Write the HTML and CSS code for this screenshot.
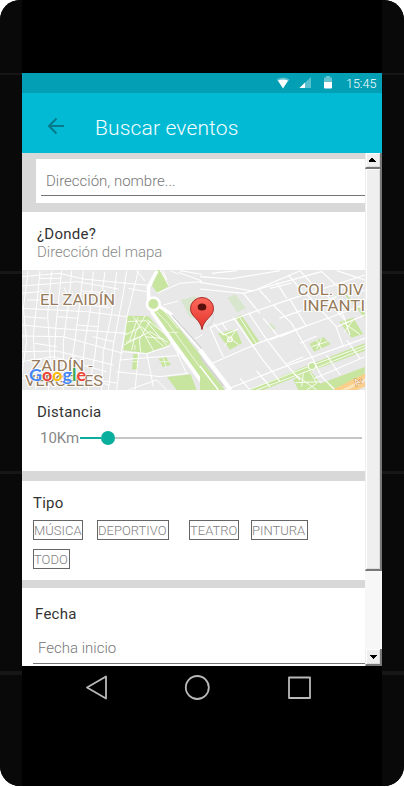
FILE: index.html
```html
<!DOCTYPE html>
<html lang="es">
<head>
<meta charset="utf-8">
<title>Buscar eventos</title>
<link rel="stylesheet" href="styles.css">
</head>
<body>
<div class="phone">
  <div class="edge"></div>
  <div class="screen">
    <div class="bezel"></div>
    <div class="status">
      <svg class="status-icons" width="60" height="20" viewBox="0 0 60 20">
        <path d="M1.5 6.5Q8 2.5 14.500 6.500L8 15Z" fill="#fff" opacity=".35"/>
        <path d="M3 7.500Q8 5.500 13 7.500L8 15.500Z" fill="#fff"/>
        <path d="M36 4V15H24.500Z" fill="#fff" opacity=".35"/>
        <path d="M30 9.500V15H24.500Z" fill="#fff"/>
        <path d="M49 4.500h2v-1.500h4v1.500h2v5h-8Z" fill="#fff" opacity=".4"/>
        <path d="M49 9h8v5.500q0 1-1 1h-6q-1 0-1-1Z" fill="#fff"/>
      </svg>
      <span class="clock">15:45</span>
    </div>
    <header class="appbar">
      <svg class="back" width="18" height="18" viewBox="0 0 18 18"><path d="M17 9H2M9.500 1.500L2 9l7.500 7.500" fill="none" stroke="#087a8c" stroke-width="2"/></svg>
      <h1>Buscar eventos</h1>
    </header>
    <div class="viewport">
      <main>
        <section class="search"><div class="searchbox"><div class="field">Dirección, nombre...</div></div></section>
        <section class="where"><h2>¿Donde?</h2><p>Dirección del mapa</p></section>
        <svg class="map" width="343" height="120" viewBox="0 0 343 120">
          <rect width="343" height="120" fill="#e8e8e8"/>
          <!-- west half -->
          <g transform="translate(-2 -5) scale(.33333)">
            <g fill="#c8e59f">
              <path d="M404 15H418L448 62L412 84L397 64Z"/>
              <path d="M322 152L386 154L452 232L444 242L380 264L310 256Z"/>
              <path d="M399 138L425 125L470 180L546 277V360L500 292Z"/>
              <path d="M340 267L354 268V314L336 313ZM416 281L438 275L453 300L428 306Z"/>
              <path d="M441 336L512 328L530 375H470Z"/>
            </g>
            <path d="M482 105L525 93L546 140V160L510 157Z" fill="#d8e6ce"/>
            <g fill="none" stroke="#fff" stroke-width="3">
              <path d="M5 35L120 25L190 42L385 61M5 63L170 50L295 72M5 85L60 80M5 130L200 140L320 155M5 180L110 190L320 205M5 213L130 215L309 265M5 260L110 258L280 300M5 290L100 275L260 320M5 340L130 330L290 354"/>
              <path d="M25 17L10 130L20 230L5 330M60 18L52 100L40 210L48 375M95 17L83 150L92 300L85 375M125 17L108 180L100 330M155 17L148 95L130 230V375M190 17L180 110L165 225L150 330M220 20L210 140L195 230L180 370M255 20L240 130L225 270L205 375M290 22L275 145L250 260L245 375M320 17L310 85L280 240L265 375M355 18L338 85L322 150L300 290L290 375M378 80L325 70M350 17L375 48"/>
              <path d="M20 105H60M60 40H124M86 94L60 75M15 155L80 160M112 155L175 160M200 120L270 128M45 235L110 245M115 285L185 302M170 180L235 185M218 215L280 230M50 310L120 315M200 345L270 360M132 67L145 96M186 78L242 82M230 100L283 105"/>
              <path d="M308 260L380 266L451 242M300 285L380 278L472 272M290 320L420 335L505 325M325 375L410 345L440 375M380 264L400 365M356 262L345 375M470 260L500 326M452 232L476 268M412 84L480 55L546 50M446 62L421 15M430 18L440 45M475 22L546 48M453 17L475 28M480 17L546 28M430 120L475 108M510 230L546 210"/>
              <path d="M322 170L378 167L441 242M316 210L365 185L430 244M312 240L390 200L445 233M340 155L362 188L402 260M375 153L348 198L335 255M390 168L358 225L362 260M318 232L360 215M354 157L329 225M375 215L430 221M430 202L381 164" stroke-width="2.500"/>
              <path d="M410 140L445 176L546 315M425 130L475 191M443 202H475M345 240V255M337 290H354M420 290L448 290M430 278L438 306" stroke-width="2"/>
              <path d="M411 17L385 67L386 105L398 144L455 226L546 352" stroke-width="11"/>
              <path d="M415 122L450 145L546 258" stroke-width="10"/>
              <circle cx="400" cy="117" r="19" fill="#c8e59f" stroke-width="8"/>
            </g>
            <path d="M456 150L546 252" stroke="#d2d2d2" stroke-width="4"/>
          </g>
          <!-- east half -->
          <g transform="translate(178 -5) scale(.33333)">
            <g fill="#c8e59f">
              <path d="M106 157L124 150L178 230L160 239ZM54 205L108 193L126 235L90 254Z"/>
              <path d="M418 170L460 158L489 207L454 218ZM328 236L370 216L392 238L343 260Z"/>
              <path d="M145 375L320 302L494 235V258L340 316L190 375ZM280 345L330 315L375 375H295Z"/>
              <path d="M360 356L494 306V330L400 375H360ZM0 280L75 375H0Z"/>
              <path d="M425 80L440 90L495 145V160L470 130Z"/>
            </g>
            <path d="M82 98L106 88L138 130L112 142ZM202 180L215 174L229 190L214 198Z" fill="#d8e6ce"/>
            <g fill="none" stroke="#fff" stroke-width="3.500">
              <path d="M0 72L130 85L365 20M0 52L160 78L300 17M0 35L90 42L240 17M35 25L110 17M30 188L70 276M30 188L240 113L495 30M25 300L180 232L410 150L495 118M40 175L70 210M65 172L80 195M100 157L185 280L240 350M145 143L200 224L258 298L300 345M190 160L235 215M220 120L275 175L340 285M270 104L320 185M320 87L408 185L430 245M360 65L430 150L450 210M365 20L410 62L495 78M410 17L495 45"/>
              <path d="M75 375L240 310L495 220M120 340L150 375M170 318L210 365M258 298L310 275M300 235L350 213M240 215L310 187M210 225L260 205M410 185L495 150M340 285L365 335L405 375M380 270L420 330M345 340L495 275M440 225L480 280M130 85L180 145M178 75L212 112M230 52L260 100M210 70L275 54M238 160L305 136M70 210L115 192M385 110L435 165M300 17L370 95M365 112L410 95M265 30L310 83"/>
              <path d="M20 185Q48 170 36 136" stroke="#dadada"/>
              <path d="M145 375L325 305L495 242M170 375L340 312L495 250" stroke-width="2.500"/>
              <path d="M66 202L116 239M108 195L73 244M120 158L170 237M426 170L480 208M460 164L432 202M335 245L382 230M350 225L365 253M365 219L350 253" stroke-width="2.500"/>
              <path d="M295 335L350 375M330 320L350 355L320 375M286 353L365 350M310 325L305 365" stroke-width="2.500"/>
              <path d="M0 255L92 375" stroke-width="13"/>
              <path d="M0 303L55 375" stroke-width="4"/>
              <circle cx="336" cy="303" r="11" fill="#c8e59f"/>
              <circle cx="90" cy="223" r="7"/>
            </g>
            <path d="M0 275L70 363" stroke="#d2d2d2" stroke-width="5"/>
            <path d="M405 378L500 330M440 382L500 355" stroke="#f9cf8b" stroke-width="13" fill="none"/>
            <path d="M425 378L500 341" stroke="#ffe5b5" stroke-width="6"/>
          </g>
          <g class="place">
            <text x="18" y="34.500" textLength="75" lengthAdjust="spacingAndGlyphs">EL ZAIDÍN</text>
            <text x="9" y="101" textLength="62" lengthAdjust="spacingAndGlyphs">ZAIDÍN -</text>
            <text x="3" y="115.500" textLength="78" lengthAdjust="spacingAndGlyphs">VERGELES</text>
            <text x="275.500" y="25" textLength="66" lengthAdjust="spacingAndGlyphs">COL. DIV</text>
            <text x="281" y="40.500" textLength="62" lengthAdjust="spacingAndGlyphs">INFANTI</text>
            <text class="road" transform="translate(334 116) rotate(-32)">A-</text>
          </g>
          <text class="google" x="7" y="111" textLength="57" lengthAdjust="spacingAndGlyphs"><tspan fill="#4285f4">G</tspan><tspan fill="#ea4335">o</tspan><tspan fill="#fbbc05">o</tspan><tspan fill="#4285f4">g</tspan><tspan fill="#34a853">l</tspan><tspan fill="#ea4335">e</tspan></text>
          <defs><linearGradient id="pin" x2="0" y2="1"><stop stop-color="#ff6a5e"/><stop offset="1" stop-color="#e13229"/></linearGradient></defs>
          <path d="M180 59.500C178.500 49 168.500 47 168.500 38.500A11.500 11 0 0 1 191.500 38.500C191.500 47 181.500 49 180 59.500Z" fill="url(#pin)" stroke="#a82b25"/>
          <ellipse cx="180" cy="37" rx="4.300" ry="3.600" fill="#590f0b"/>
        </svg>
        <section class="distance">
          <h2>Distancia</h2>
          <div class="slider"><span>10Km</span><div class="rail"><div class="done"></div><div class="knob"></div><div class="rest"></div></div></div>
        </section>
        <section class="type">
          <h2>Tipo</h2>
          <div class="tags"><span class="tag musica">MÚSICA</span><span class="tag deportivo">DEPORTIVO</span><span class="tag teatro">TEATRO</span><span class="tag pintura">PINTURA</span></div>
          <div class="tags"><span class="tag todo">TODO</span></div>
        </section>
        <section class="date"><h2>Fecha</h2><div class="datefield">Fecha inicio</div></section>
      </main>
      <div class="scrollbar">
        <div class="sbtn up"><svg width="7" height="4" viewBox="0 0 7 4" shape-rendering="crispEdges"><path d="M2 0h2v1h1v1h1v1h1v1H0V2h1V1h1Z"/></svg></div>
        <div class="thumb"></div>
        <div class="track"></div>
        <div class="sbtn down"><svg width="7" height="4" viewBox="0 0 7 4" shape-rendering="crispEdges"><path d="M0 0h7v1H6v1H5v1H4v1H3V3H2V2H1V1H0Z"/></svg></div>
      </div>
    </div>
    <nav>
      <svg width="360" height="44" viewBox="0 0 360 44" fill="none" stroke="#b9b9b9" stroke-width="1.800" stroke-linejoin="round">
        <path d="M84 10.500V32.500L65 21.500Z"/><circle cx="175.300" cy="21.500" r="11.500"/><rect x="267" y="11.500" width="21" height="20.500"/>
      </svg>
    </nav>
  </div>
  <div class="edge"></div>
</div>
</body>
</html>
```
FILE: styles.css
```css
* { box-sizing: border-box; }
body { margin: 0; background: #fff; font-family: Roboto, "Liberation Sans", sans-serif; font-weight: 300; }
h1, h2, p { margin: 0; }
svg { display: block; flex: none; }
.phone { display: flex; width: 404px; height: 786px; border-radius: 20px; overflow: hidden; background: #000; }
.edge { flex: 1; background: linear-gradient(#161616, #161616) 0 73px / 100% 2px no-repeat, linear-gradient(#161616, #161616) 0 271px / 100% 3px no-repeat, linear-gradient(#161616, #161616) 0 471px / 100% 3px no-repeat, linear-gradient(#161616, #161616) 0 671px / 100% 4px no-repeat, #090909; }
.screen { width: 360px; }
.bezel { height: 73px; }
.status { height: 20px; background: #039fb4; display: flex; justify-content: flex-end; padding-right: 5px; }
.status-icons { margin-right: 11px; }
.clock { color: #fff; font-size: 12.500px; line-height: 21px; font-weight: 300; width: 31px; white-space: nowrap; }
.appbar { height: 60px; background: #03bad4; display: flex; align-items: center; padding: 6px 0 0 25px; }
.appbar h1 { margin: 3px 0 0 30px; font-size: 21px; letter-spacing: .15px; font-weight: 300; color: #f4fdff; line-height: 24px; white-space: nowrap; }
.viewport { display: flex; height: 513px; background: #fff; }
main { width: 343px; overflow: hidden; }
h2 { font-size: 15px; line-height: 18px; font-weight: 400; letter-spacing: .25px; color: #333; }
.search { height: 59px; background: #d8d8d8; padding: 6px 0 0 14px; }
.searchbox { height: 44px; background: #fff; padding: 6px 0 0 5px; }
.field { height: 31px; border-bottom: 1px solid #757575; color: #777; font-size: 15px; line-height: 32px; padding-left: 5px; }
.where { height: 58px; padding: 13px 0 0 15px; }
.where p { font-size: 15px; line-height: 18px; color: #888; letter-spacing: -.03px; }
.place { font-size: 14px; font-weight: 400; fill: #967a5b; stroke: #fff; stroke-width: 2px; paint-order: stroke; }
.place .road { font-size: 9px; fill: #fff; stroke: #d99a50; stroke-width: 1.500px; }
.google { font-family: Lato, sans-serif; font-size: 17px; font-weight: 700; stroke: #fff; stroke-width: 1px; paint-order: stroke; }
.distance { height: 91px; border-bottom: 10px solid #d8d8d8; padding: 13px 0 0 15px; }
.slider { display: flex; align-items: center; height: 16px; margin-top: 9px; padding-left: 3px; }
.slider span { width: 40px; font-size: 15px; font-weight: 400; color: #888; }
.rail { display: flex; align-items: center; width: 282px; }
.done { width: 21px; height: 2px; background: #09ae9d; }
.knob { width: 14px; height: 14px; border-radius: 50%; background: #09ae9d; }
.rest { flex: 1; height: 2px; background: #c6c6c6; }
.type { height: 107px; border-bottom: 8px solid #d8d8d8; padding: 13px 0 0 11px; }
.tags { display: flex; margin-top: 8px; height: 20px; }
.tags + .tags { margin-top: 9px; }
.tag { border: 1px solid #666; font-size: 13px; line-height: 20px; color: #808080; white-space: nowrap; }
.musica { width: 50px; margin-right: 14px; }
.deportivo { width: 72px; margin-right: 20px; }
.teatro { width: 50px; margin-right: 12px; }
.pintura { width: 57px; }
.todo { width: 37px; }
.date { height: 78px; padding: 17px 0 0 11px; }
.date h2 { padding-left: 2px; }
.datefield { height: 41px; padding: 16px 0 0 5px; border-bottom: 1px solid #757575; font-size: 15px; line-height: 18px; color: #777; }
.scrollbar { width: 17px; display: flex; flex-direction: column; }
.sbtn, .thumb { background: #efefef; border-right: 2px solid #777; border-bottom: 2px solid #777; border-left: 1px solid #eee; box-shadow: inset 1px 1px #fff, inset -1px -1px #ddd; }
.up { height: 16px; padding: 5px 0 0 3px; }
.thumb { height: 402px; }
.track { flex: 1; background: #f7f7f7; }
.down { height: 17px; padding: 6px 0 0 4px; }
nav { height: 120px; }
```
